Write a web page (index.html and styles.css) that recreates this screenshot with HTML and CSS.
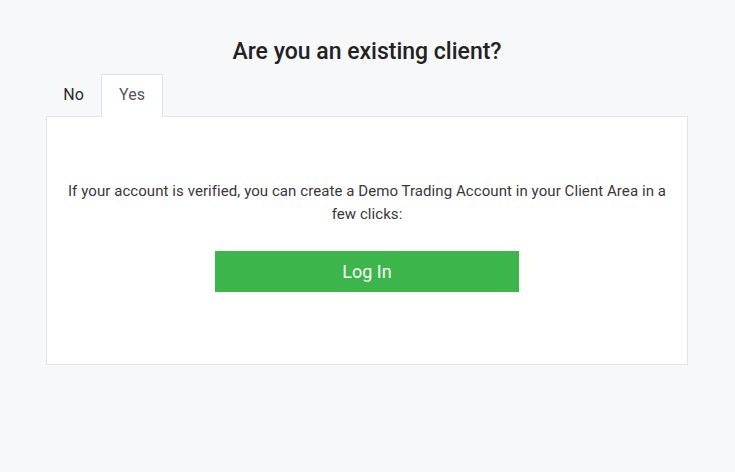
FILE: index.html
```html
<!DOCTYPE html>
<html lang="en">
<head>
<meta charset="utf-8">
<title>Are you an existing client?</title>
<link rel="stylesheet" href="styles.css">
</head>
<body>
<main class="page">
  <h1 class="title">Are you an existing client?</h1>
  <div class="tabs">
    <div class="tab">No</div>
    <div class="tab tab-active">Yes</div>
  </div>
  <section class="panel">
    <p class="panel-text">If your account is verified, you can create a Demo Trading Account in your Client Area in a few clicks:</p>
    <a class="btn-login" href="#">Log In</a>
  </section>
</main>
</body>
</html>
```

FILE: styles.css
```css
html, body {
  margin: 0;
  padding: 0;
}
body {
  background: #f7f8fa;
  font-family: Roboto, "Liberation Sans", Arial, sans-serif;
  color: #333;
  width: 735px;
  height: 472px;
}
.page {
  width: 642px;
  margin: 0 auto 0 46px;
  padding-top: 36px;
}
.title {
  margin: 0;
  text-align: center;
  font-size: 23px;
  font-weight: 500;
  line-height: 32px;
  color: #222;
}
.tabs {
  display: flex;
  margin-top: 6px;
  position: relative;
  z-index: 1;
}
.tab {
  width: 55px;
  height: 42px;
  box-sizing: border-box;
  font-size: 16px;
  line-height: 40px;
  text-align: center;
  color: #2b2b2b;
  border: 1px solid transparent;
  border-bottom: none;
}
.tab-active {
  width: 62px;
  background: #fff;
  border-color: #e1e3e6;
  color: #555;
  height: 43px;
}
.panel {
  background: #fff;
  border: 1px solid #e1e3e6;
  margin-top: -1px;
  padding: 63px 18px 72px;
  display: flex;
  flex-direction: column;
  align-items: center;
}
.panel-text {
  margin: 0;
  font-size: 15px;
  line-height: 23px;
  letter-spacing: 0.07px;
  text-align: center;
  color: #383838;
}
.btn-login {
  display: block;
  margin-top: 25px;
  width: 304px;
  height: 41px;
  background: #3cb54b;
  color: #fff;
  font-size: 18px;
  line-height: 41px;
  text-align: center;
  text-decoration: none;
}
```
